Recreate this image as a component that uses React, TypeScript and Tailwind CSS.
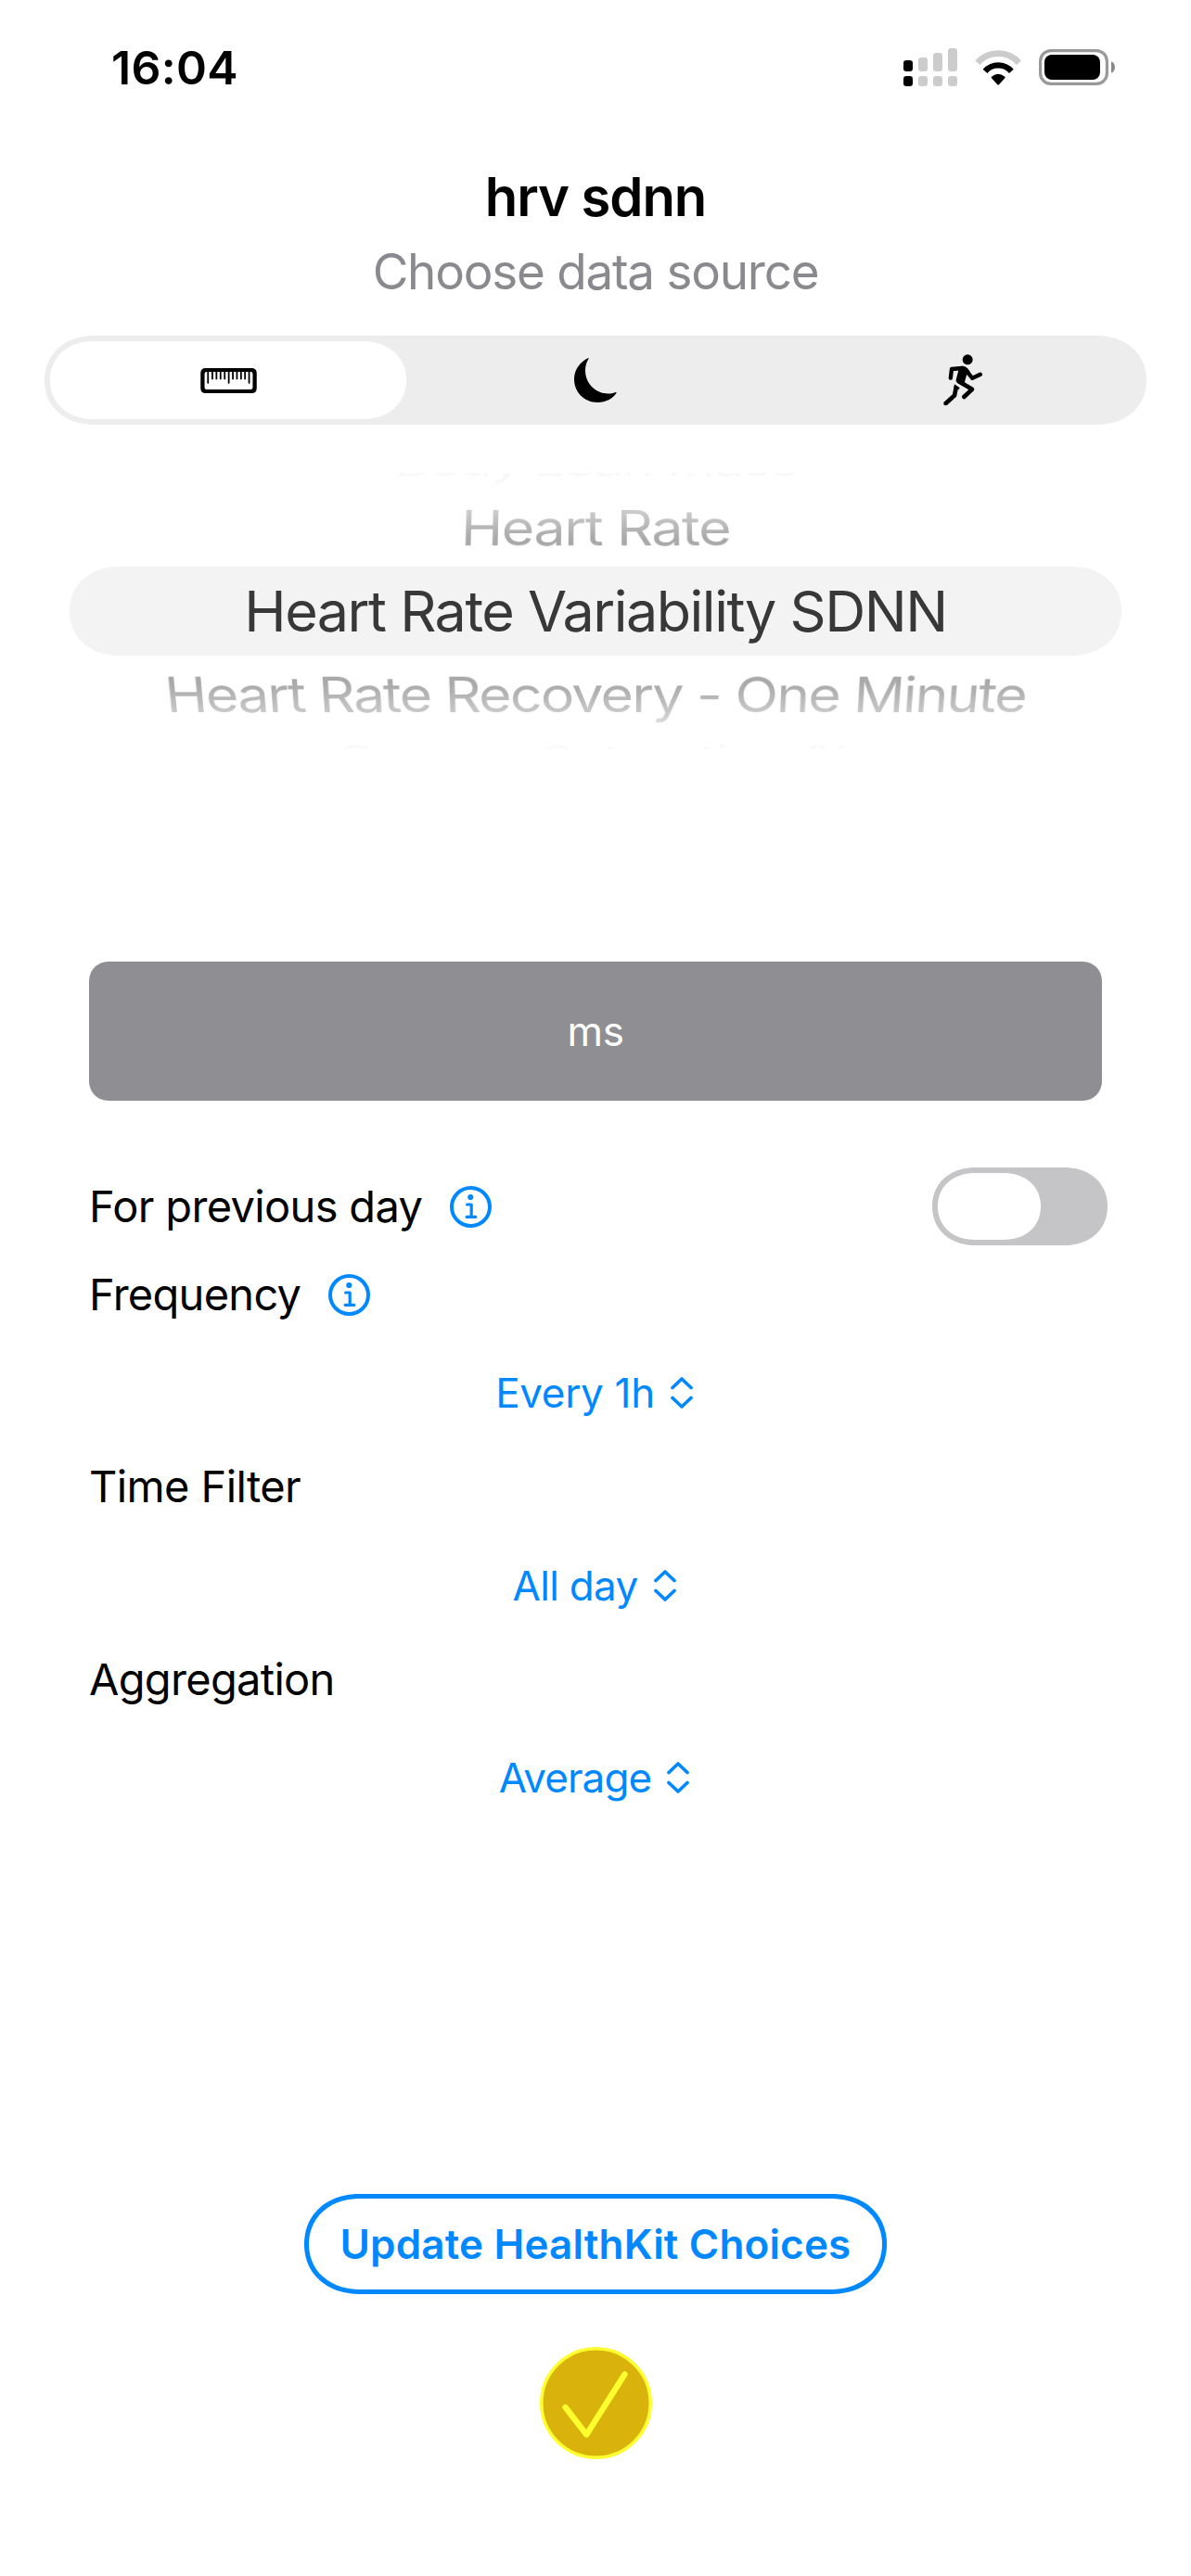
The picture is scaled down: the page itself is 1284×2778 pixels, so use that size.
import React from "react";

function SignalIcon() {
  const bars = [
    { x: 0, y: 13, on: true },
    { x: 16, y: 10, on: false },
    { x: 32, y: 5, on: false },
    { x: 48, y: 0, on: false },
  ];
  return (
    <svg width="58" height="41" viewBox="0 0 58 41">
      {bars.map((b) => (
        <g key={b.x} fill={b.on ? "#000" : "#ccc"}>
          <rect x={b.x} y={b.y} width="10" height={25 - b.y} rx="3.2" />
          <rect x={b.x} y="30" width="10" height="11" rx="3.2" />
        </g>
      ))}
    </svg>
  );
}

function WifiIcon() {
  return (
    <svg width="50" height="38" viewBox="331 70 150 114" fill="none">
      <path d="M339.5 111A89.7 89.7 0 0 1 473.500 111" stroke="#ccc" strokeWidth="20" />
      <path d="M364 138.500A56 56 0 0 1 449 138.500" stroke="#000" strokeWidth="19" />
      <path d="M385 161Q382 158 386 155.500Q406.500 139 427 155.500Q431 158 428 161L409 181.500Q406.500 184 404 181.500Z" fill="#000" />
    </svg>
  );
}

function BatteryIcon() {
  return (
    <svg width="82" height="39" viewBox="0 0 82 39">
      <rect x="1.6" y="1.6" width="71.8" height="35.8" rx="11.5" fill="none" stroke="#999" strokeWidth="3.2" />
      <rect x="6" y="6" width="60" height="27" rx="8" />
      <path d="M78 13.300C80.500 14.300 82 16.700 82 19.500S80.500 24.700 78 25.700Z" fill="#888" />
    </svg>
  );
}

function RulerIcon() {
  const ticks = [8, 12.7, 17.1, 21.5, 26, 30.4, 34.8, 39.2, 43.6, 47.9, 52.3];
  return (
    <svg width="61" height="27" viewBox="0 0 60.500 27">
      <path
        fillRule="evenodd"
        d="M5.500 0H55Q60.500 0 60.500 5.500V21.500Q60.500 27 55 27H5.500Q0 27 0 21.500V5.500Q0 0 5.500 0ZM6.500 4Q4.300 4 4.300 6.200V20.800Q4.300 23 6.500 23H54Q56.200 23 56.200 20.800V6.200Q56.200 4 54 4Z"
      />
      {ticks.map((x, i) => (
        <rect key={x} x={x - 0.9} y="3" width="1.8" height={i % 5 === 0 ? 13.7 : 9.3} rx="0.6" />
      ))}
    </svg>
  );
}

function MoonIcon() {
  return (
    <svg width="46" height="48" viewBox="0 0 46 48">
      <path d="M14.800 0.200C6 4.500 0 13 0 23C0 37 11 48 25.300 48C34 48 41.800 43.800 45.400 38C45.900 37.100 45.300 36.800 44.300 37.200C42 38 39.500 38.500 37 38.500C23 38.500 12 27.500 12 13.500C12 9 13 5 15.200 1.500C15.900 0.300 15.600 -0.100 14.800 0.200Z" />
    </svg>
  );
}

function RunnerIcon() {
  return (
    <svg width="42" height="56" viewBox="352 98 126 167" fill="none" stroke="#000" strokeLinecap="round" strokeLinejoin="round">
      <circle cx="430.500" cy="115" r="16.500" fill="#000" stroke="none" />
      <path d="M375.500 174.500L379 145.500L414 142.500" strokeWidth="13" />
      <path d="M424 148L446 175L471.500 163" strokeWidth="13" />
      <path d="M404 187L445 211L419 235.500" strokeWidth="14" />
      <path d="M401 150L399 138L414 136Q424 136 431 144L438 154L427 166L421 187L424 197L402 193Q392 189 393 181Z" fill="#000" stroke="none" />
      <path d="M359 257L388 231L394 202" strokeWidth="14" strokeLinecap="butt" />
      <circle cx="359.500" cy="256.500" r="7" fill="#000" stroke="none" />
      <path d="M388 194L405 206L401 212L386 208Z" fill="#000" stroke="none" />
    </svg>
  );
}

function InfoIcon() {
  return (
    <svg width="45" height="45" viewBox="0 0 45 45" fill="none" stroke="#0088ff" strokeLinecap="round" strokeLinejoin="round">
      <circle cx="22.500" cy="22.500" r="20.500" strokeWidth="4" />
      <circle cx="22.300" cy="12" r="3.100" fill="#0088ff" stroke="none" />
      <path d="M18.600 20H23.200V33.200M18.200 33.400H27.800" strokeWidth="3.200" />
    </svg>
  );
}

function ChevronsIcon() {
  return (
    <svg width="24" height="34" viewBox="0 0 24 34" fill="none" stroke="#0088ff" strokeWidth="3.700" strokeLinecap="round" strokeLinejoin="round">
      <path d="M2 11.500L12 2L22 11.500M2 22.500L12 32L22 22.500" />
    </svg>
  );
}

function CheckIcon() {
  return (
    <svg width="121" height="121" viewBox="0 0 121 121" fill="none" stroke="#ffff2e" strokeLinecap="round" strokeLinejoin="round">
      <circle cx="60.500" cy="60.500" r="58.700" fill="#d9b20c" strokeWidth="3.500" />
      <path d="M27.500 65L50.300 94.500L91.500 29.500" strokeWidth="6.300" />
    </svg>
  );
}

function Popup({ label, spacing }: { label: string; spacing: string }) {
  return (
    <button className="flex h-[60px] items-center justify-center gap-[17px] pr-[3px] text-[44px] leading-[60px] text-[#0088ff]">
      <span className={spacing}>{label}</span>
      <ChevronsIcon />
    </button>
  );
}

export default function App() {
  return (
    <div className="flex h-[2778px] w-[1284px] flex-col overflow-hidden bg-white font-['Inter',sans-serif] text-black">
      <header className="flex h-[146px] items-center justify-between pr-[82px] pl-[120px]">
        <span className="text-[50px] leading-[60px] font-semibold tracking-[0.3px]">16:04</span>
        <div className="flex items-center gap-[19px] pb-px">
          <SignalIcon />
          <WifiIcon />
          <BatteryIcon />
        </div>
      </header>

      <h1 className="mt-[31px] text-center text-[58px] leading-[70px] font-semibold tracking-[-1.1px]">hrv sdnn</h1>
      <p className="mt-[15px] text-center text-[53px] leading-[62px] tracking-[-1.25px] text-[#8a8a8e]">Choose data source</p>

      <div className="mx-12 mt-[38px] grid h-24 grid-cols-3 rounded-[54px/48px] bg-[#ededed] p-1.5 [corner-shape:superellipse(1.1)]">
        <button className="flex w-[384px] items-center justify-center rounded-[47px/42px] bg-white [corner-shape:superellipse(1.1)]">
          <RulerIcon />
        </button>
        <button className="flex items-center justify-center">
          <MoonIcon />
        </button>
        <button className="flex items-center justify-center pl-[7px]">
          <RunnerIcon />
        </button>
      </div>

      <div className="relative mt-[52px] flex h-[298px] flex-col items-center justify-center overflow-hidden text-[61px] leading-[90px] tracking-[-1.49px] whitespace-nowrap">
        <div className="absolute inset-x-[75px] top-[101px] h-24 rounded-[54px/48px] bg-[#f3f3f3] [corner-shape:superellipse(1.1)]" />
        <div className="-mt-[3px] flex h-[47px] shrink-0 items-center">
          <span className="[transform:perspective(2600px)_rotateX(56deg)_scaleX(0.945)] text-[#f8f8f8]">Body Lean Mass</span>
        </div>
        <div className="shrink-0 [transform:perspective(2600px)_rotateX(29deg)] bg-[linear-gradient(to_bottom,#cecece_23px,#a9a9a9_58px)] bg-clip-text text-transparent">
          Heart Rate
        </div>
        <div className="relative shrink-0 text-[#383838]">Heart Rate Variability SDNN</div>
        <div className="shrink-0 [transform:perspective(2600px)_rotateX(-29deg)] bg-[linear-gradient(to_bottom,#a9a9a9_32px,#cbcbcb_70px,#dedede_82px)] bg-clip-text tracking-[-1.86px] text-transparent">
          Heart Rate Recovery - One Minute
        </div>
        <div className="flex h-11 shrink-0 items-center">
          <span className="[transform:perspective(2600px)_rotateX(-55deg)_scaleX(0.96)] text-[#fafafa]">Oxygen Saturation %</span>
        </div>
      </div>

      <div className="mx-24 mt-[229px] flex h-[150px] shrink-0 items-center justify-center rounded-[22px] bg-[#8e8e93] text-[44px] leading-[60px] tracking-[-0.5px] text-white [corner-shape:superellipse(1.1)]">
        ms
      </div>

      <div className="mt-[72px] flex h-[84px] items-center pr-[90px] pl-24">
        <span className="text-[47px] leading-[60px] tracking-[-0.66px]">For previous day</span>
        <span className="ml-[30px]">
          <InfoIcon />
        </span>
        <button className="ml-auto h-[84px] w-[189px] rounded-[47px/42px] bg-[#c5c5c7] p-1.5 [corner-shape:superellipse(1.1)]">
          <span className="block h-[72px] w-[111px] rounded-[40px/36px] bg-white [corner-shape:superellipse(1.1)]" />
        </button>
      </div>

      <div className="mt-[23px] flex h-[60px] items-center pl-24">
        <span className="text-[47px] leading-[60px] tracking-[-0.72px]">Frequency</span>
        <span className="ml-[30px]">
          <InfoIcon />
        </span>
      </div>
      <div className="mt-[46px] flex justify-center">
        <Popup label="Every 1h" spacing="tracking-[-0.32px]" />
      </div>

      <div className="mt-[41px] pl-24 text-[47px] leading-[60px] tracking-[-0.6px]">Time Filter</div>
      <div className="mt-[47px] flex justify-center">
        <Popup label="All day" spacing="tracking-[-0.67px]" />
      </div>

      <div className="mt-[41px] pl-24 text-[47px] leading-[60px] tracking-[-0.7px]">Aggregation</div>
      <div className="mt-[46px] flex justify-center">
        <Popup label="Average" spacing="tracking-[-0.92px]" />
      </div>

      <div className="mt-[419px] flex flex-col items-center gap-[57px]">
        <button className="h-[108px] w-[628px] rounded-[60px/54px] border-[5px] border-[#0088ff] text-[44px] leading-[60px] font-semibold tracking-[0.16px] whitespace-nowrap text-[#0088ff] [corner-shape:superellipse(1.1)]">
          Update HealthKit Choices
        </button>
        <button className="pl-px">
          <CheckIcon />
        </button>
      </div>
    </div>
  );
}
